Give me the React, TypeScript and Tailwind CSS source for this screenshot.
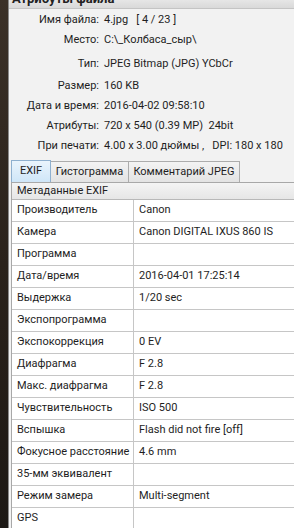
const info: { label: string; value: string; cls: string }[] = [
  { label: "Имя файла:", value: "4.jpg   [ 4 / 23 ]", cls: "mt-px" },
  { label: "Место:", value: "C:\\_Колбаса_сыр\\", cls: "" },
  { label: "Тип:", value: "JPEG Bitmap (JPG) YCbCr", cls: "mt-[4px]" },
  { label: "Размер:", value: "160 KB", cls: "mt-[2px]" },
  { label: "Дата и время:", value: "2016-04-02 09:58:10", cls: "" },
  { label: "Атрибуты:", value: "720 x 540 (0.39 MP)  24bit", cls: "" },
  { label: "При печати:", value: "4.00 x 3.00 дюймы ,   DPI: 180 x 180", cls: "" },
];

const exif: [string, string][] = [
  ["Производитель", "Canon"],
  ["Камера", "Canon DIGITAL IXUS 860 IS"],
  ["Программа", ""],
  ["Дата/время", "2016-04-01 17:25:14"],
  ["Выдержка", "1/20 sec"],
  ["Экспопрограмма", ""],
  ["Экспокоррекция", "0 EV"],
  ["Диафрагма", "F 2.8"],
  ["Макс. диафрагма", "F 2.8"],
  ["Чувствительность", "ISO 500"],
  ["Вспышка", "Flash did not fire [off]"],
  ["Фокусное расстояние", "4.6 mm"],
  ["35-мм эквивалент", ""],
  ["Режим замера", "Multi-segment"],
  ["GPS", ""],
];

export default function App() {
  return (
    <div
      className="flex w-[294px] h-[528px] overflow-hidden text-[11px] text-[#1e1e1e]"
      style={{ fontFamily: "Roboto, Arial, sans-serif" }}
    >
      <div className="w-[8px] shrink-0 bg-gradient-to-b from-[#3b3128] via-[#2a221b] to-[#1d1915]" />
      <div className="flex-1 min-w-0 flex flex-col border-l border-[#8a8a8a] bg-[#f2f2f2]">
        <div className="h-[9px] shrink-0 overflow-hidden border-b border-[#c4c4c4] bg-gradient-to-b from-[#e6e6e6] to-[#d9d9d9] pl-[3px]">
          <div className="-mt-[8px] font-bold text-[13px] leading-[14px] text-[#222]">Атрибуты файла</div>
        </div>

        {info.map((r) => (
          <div key={r.label} className={`flex h-[20px] items-center shrink-0 ${r.cls}`}>
            <div className="w-[90px] shrink-0 text-right">{r.label}</div>
            <div className="pl-[5px] whitespace-pre">{r.value}</div>
          </div>
        ))}

        <div className="flex mt-[4px] pl-[2px] h-[22px] shrink-0 items-end">
          <div className="h-[22px] w-[40px] flex items-center justify-center border border-b-0 border-[#8fb0cf] bg-gradient-to-b from-[#eaf4fc] to-[#cfe6f8]">
            EXIF
          </div>
          <div className="h-[21px] w-[78px] flex items-center justify-center border border-b-0 border-l-0 border-[#acacac] bg-gradient-to-b from-[#f3f3f3] to-[#e3e3e3] whitespace-nowrap">
            Гистограмма
          </div>
          <div className="h-[21px] w-[111px] flex items-center justify-center border border-b-0 border-l-0 border-[#acacac] bg-gradient-to-b from-[#f3f3f3] to-[#e3e3e3] whitespace-nowrap">
            Комментарий JPEG
          </div>
        </div>

        <div className="flex-1 min-h-0 flex flex-col ml-[2px] border-l border-t border-[#a8a8a8] bg-white">
          <div className="h-[17px] shrink-0 flex items-center pl-[5px] border-b border-[#b8b8b8] bg-gradient-to-b from-[#f4f4f4] to-[#e6e6e6]">
            Метаданные EXIF
          </div>
          {exif.map(([k, v]) => (
            <div key={k} className="flex h-[22px] shrink-0 border-b border-[#c6c6c6]">
              <div className="w-[122px] shrink-0 overflow-hidden whitespace-nowrap flex items-center pl-[5px] border-r border-[#c6c6c6]">
                {k}
              </div>
              <div className="flex items-center pl-[5px] whitespace-nowrap">{v}</div>
            </div>
          ))}
        </div>
      </div>
    </div>
  );
}
